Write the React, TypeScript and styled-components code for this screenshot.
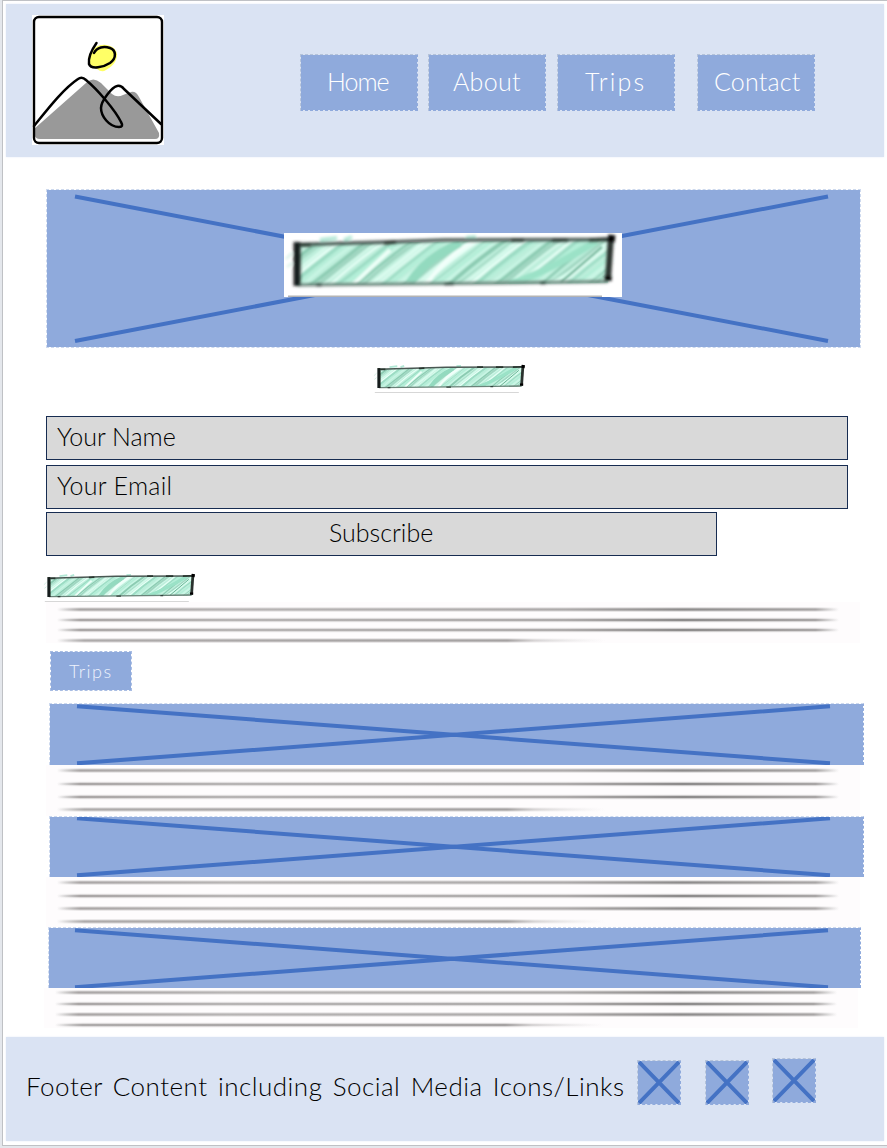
import React from 'react';
import styled, { createGlobalStyle } from 'styled-components';

const ink = '#4472c4';
const block = '#8faadc';
const pale = '#dae3f3';

const GlobalStyle = createGlobalStyle`
  *, *::before, *::after { box-sizing: border-box; }
  body { margin: 0; background: #e4e7ec; }
  svg { display: block; }
`;

const Page = styled.div`
  height: 1146px;
  margin-left: 2px;
  padding: 3px 3px 0;
  border: solid #bfc1c5;
  border-width: 1px 0 1px 1px;
  background: #fff;
  overflow: hidden;
  font-family: 'Ink Free', Lato, 'Liberation Sans', sans-serif;
  font-weight: 300;
  font-size: 25px;
  line-height: 32px;
`;

const Header = styled.header`
  display: flex;
  align-items: flex-start;
  width: 878px;
  height: 153px;
  padding: 11px 0 0 26px;
  background: ${pale};
  box-shadow: 0 0 2px #e6ecf7;
`;

const Nav = styled.nav`
  display: flex;
  gap: 11px;
  margin: 39px 0 0 136px;
`;

const dashedEdge = `
  background: ${block};
  background-clip: padding-box;
  border: 1px dashed ${block};
  border-top-color: #b5c3d9;
  border-left-color: #b5c3d9;
`;

const NavButton = styled.a<{ $shift?: number; $gap?: number; $spacing: number }>`
  ${dashedEdge}
  width: 118px;
  height: 57px;
  margin-left: ${(p) => p.$gap ?? 0}px;
  padding: 10px 0 0 ${(p) => p.$shift ?? 0}px;
  color: #fff;
  letter-spacing: ${(p) => p.$spacing}px;
  white-space: nowrap;
`;

const Main = styled.main`
  display: flex;
  flex-direction: column;
  align-items: flex-start;
  height: 880px;
  padding: 32px 0 0 40px;
`;

const Hero = styled.section`
  ${dashedEdge}
  border-color: #cdd9ee;
  display: grid;
  width: 815px;
  height: 159px;
  > * { grid-area: 1 / 1; }
`;

const Plate = styled.div`
  width: 338px;
  height: 64px;
  margin: 43px 0 0 237px;
  background: #fff;
`;

const Heading = styled.div<{ $left: number; $top: number }>`
  width: 155px;
  height: 29px;
  margin: ${(p) => p.$top}px 0 0 ${(p) => p.$left}px;
`;

const Form = styled.form`
  display: flex;
  flex-direction: column;
  margin-top: 23px;
  color: #000;
`;

const Field = styled.div<{ $spacing: number }>`
  width: 802px;
  height: 44px;
  margin-bottom: 5px;
  padding: 3px 0 0 10px;
  background: #d9d9d9;
  border: 1px solid #172c51;
  letter-spacing: ${(p) => p.$spacing}px;
`;

const Submit = styled(Field)`
  width: 671px;
  margin: -2px 0 0;
  padding: 3px 0 0 282px;
`;

const Copy = styled.div<{ $h: number; $left?: number }>`
  width: 814px;
  height: ${(p) => p.$h}px;
  margin-left: ${(p) => p.$left ?? 0}px;
  background: #fefcfd;
`;

const TripsButton = styled.a`
  ${dashedEdge}
  border-color: #a9bde3;
  width: 82px;
  height: 40px;
  margin: 8px 0 12px 4px;
  padding: 3px 0 0 18px;
  color: #eef3fc;
  font-size: 18px;
  letter-spacing: 1.5px;
`;

const Banner = styled.section<{ $h: number; $left: number; $w: number }>`
  ${dashedEdge}
  border-top-color: #cdd9ee;
  border-left-color: #cdd9ee;
  border-bottom: 0;
  width: ${(p) => p.$w}px;
  height: ${(p) => p.$h}px;
  margin-left: ${(p) => p.$left}px;
`;

const Footer = styled.footer`
  display: flex;
  align-items: flex-start;
  width: 878px;
  height: 104px;
  padding: 22px 0 0 20px;
  background: ${pale};
  box-shadow: 0 0 2px #e6ecf7;
`;

const FooterText = styled.p`
  width: 611px;
  margin: 11px 0 0;
  color: #000;
  font-size: 26px;
  letter-spacing: 0.5px;
  word-spacing: 2.7px;
  white-space: nowrap;
`;

const SocialLink = styled.a<{ $raise?: number; $gap?: number }>`
  ${dashedEdge}
  width: 44px;
  height: 45px;
  margin: ${(p) => 1 - (p.$raise ?? 0)}px 0 0 ${(p) => p.$gap ?? 0}px;
`;

function Logo() {
  return (
    <svg width="132" height="130" viewBox="0 0 132 130">
      <rect width="132" height="130" fill="#fff" />
      <path d="M2 114 L54 68 Q61 61 69 68 L80 79 Q85 83 91 80 L99 77 Q104 76 107 82 L127 118 Q128 124 123 124 H8 Q3 124 2 119Z" fill="#999" />
      <path d="M64 32 C72 27 84 31 85 39 C85 48 79 52 74 55 Q70 58 65 54 L58 51 C54 44 57 37 64 32Z" fill="#ff6" />
      <rect x="2" y="2" width="128" height="126" rx="5" fill="none" stroke="#000" strokeWidth="2.4" />
      <g fill="none" stroke="#000" strokeWidth="2.5" strokeLinecap="round" strokeLinejoin="round">
        <path d="M2 111 C15 95 31 74 46 64 Q50 61 54 65 C66 75 83 95 89 107 Q92 112 87 112 C77 112 69 101 69 93 C69 86 80 72 85 71 Q89 70 92 74 L129 109" />
        <path d="M64.500 28 C61 33 56 42 57 49 C59 55 72 52 78 48 C85 43 84 35 78 33 C72 31 65 32 62 38" />
      </g>
    </svg>
  );
}

function Cross({ w, h, x1, x2, y1, y2, stroke = 4 }: { w: number; h: number; x1: number; x2: number; y1: number; y2: number; stroke?: number }) {
  return (
    <svg width={w} height={h} viewBox={`0 0 ${w} ${h}`}>
      <path d={`M${x1} ${y1} L${x2} ${y2} M${x1} ${y2} L${x2} ${y1}`} stroke={ink} strokeWidth={stroke} fill="none" />
    </svg>
  );
}

const hatch = Array.from({ length: 58 }, (_, i) => ({
  x: -42 + i * 6.6,
  bend: 5 + ((i * 7) % 9),
  width: 1.6 + ((i * 5) % 4) * 0.8,
  color: ['#9cdcc4', '#d9fbee', '#8ccbb2', '#b3efd8', '#e6fff6', '#a0d6c1', '#c9f6e5'][(i * 3) % 7],
}));

function SketchTitle({ id, soft = 1 }: { id: string; soft?: number }) {
  return (
    <svg width="100%" height="100%" viewBox="0 0 338 64" preserveAspectRatio="none">
      <defs>
        <filter id={`${id}-soft`} x="-5%" y="-20%" width="110%" height="140%"><feGaussianBlur stdDeviation={soft} /></filter>
        <filter id={`${id}-edge`} x="-5%" y="-20%" width="110%" height="140%"><feGaussianBlur stdDeviation={soft * 1.4} /></filter>
        <clipPath id={`${id}-clip`}><path d="M12 11 L327 6 L324 50 L12 52Z" /></clipPath>
      </defs>
      <path d="M4 63.3 H318" stroke="#b4b4b4" strokeWidth="1.4" />
      <g clipPath={`url(#${id}-clip)`}>
        <rect width="338" height="64" fill="#bdeedb" />
        <g filter={`url(#${id}-soft)`} fill="none">
          {hatch.map((s) => (
            <path key={s.x} d={`M${s.x} 54 Q${s.x + 22 + s.bend} 28 ${s.x + 62} 5`} stroke={s.color} strokeWidth={s.width} />
          ))}
          <path d="M126 50 Q142 25 176 10" stroke="#93dabf" strokeWidth="9" />
          <path d="M142 53 Q157 27 190 8" stroke="#f2fffa" strokeWidth="4" />
          <path d="M224 52 Q266 38 312 8" stroke="#9be2c7" strokeWidth="7" />
          <path d="M266 51 Q297 34 322 12" stroke="#d8fff0" strokeWidth="3" />
          <path d="M277 49 L318 14" stroke="#5fa98b" strokeWidth="2" />
          <path d="M70 51 Q82 39 106 17" stroke="#edfff8" strokeWidth="4" />
        </g>
      </g>
      <g filter={`url(#${id}-edge)`} fill="none">
        <path d="M36 7 L53 5 M60 7 L68 4 M182 5 L192 4" stroke="#b3e8d6" strokeWidth="4" />
        <path d="M2 26 L8 20 M3 34 L8 30" stroke="#d2efe5" strokeWidth="2" />
        <path d="M12 11.5 L105 9 L160 7 L327 6.5" stroke="#4a5853" strokeWidth="3.4" />
        <path d="M17 12 L27 12 M100 10 L112 9 M227 7 L240 7 M268 7 L284 7 M305 7 L324 6" stroke="#29352f" strokeWidth="3.6" />
        <path d="M13 52 L120 51 L220 50 L324 48.5" stroke="#6b8379" strokeWidth="3" />
        <path d="M32 52 H38 M160 51 H170 M256 50 H262" stroke="#33433c" strokeWidth="2.5" />
        <path d="M13 9 L13 53" stroke="#161c1a" strokeWidth="7" />
        <path d="M327 3 L324 47" stroke="#29302d" strokeWidth="6" />
        <path d="M328 2 L327 9 M324 43 V48" stroke="#000" strokeWidth="7" />
      </g>
    </svg>
  );
}

function CopyLines({ id, h, rows, left = 0 }: { id: string; h: number; rows: number[]; left?: number }) {
  return (
    <Copy $h={h} $left={left}>
      <svg width="814" height={h} viewBox={`0 0 814 ${h}`}>
        <defs>
          <linearGradient id={`${id}-full`} gradientUnits="userSpaceOnUse" x1="11" x2="793" y1="0" y2="0">
            <stop offset="0" stopColor="#aaa" stopOpacity="0" />
            <stop offset=".03" stopColor="#aaa6a6" />
            <stop offset=".22" stopColor="#b7b4b4" />
            <stop offset=".65" stopColor="#adaaaa" />
            <stop offset=".8" stopColor="#8d8b8b" />
            <stop offset=".97" stopColor="#a9a6a6" />
            <stop offset="1" stopColor="#bbb" stopOpacity="0" />
          </linearGradient>
          <linearGradient id={`${id}-last`} gradientUnits="userSpaceOnUse" x1="11" x2="560" y1="0" y2="0">
            <stop offset="0" stopColor="#aaa" stopOpacity="0" />
            <stop offset=".05" stopColor="#aeabab" />
            <stop offset=".82" stopColor="#a5a2a2" />
            <stop offset=".87" stopColor="#bcb9b9" stopOpacity=".5" />
            <stop offset="1" stopColor="#ddd" stopOpacity="0" />
          </linearGradient>
        </defs>
        {rows.map((y, i) => (
          <g key={y} fill={`url(#${id}-${i === 3 ? 'last' : 'full'})`}>
            <rect x="8" y={y - 2.2} width="790" height="4.4" opacity=".35" />
            <rect x="8" y={y - 1.1} width="790" height="2.2" />
          </g>
        ))}
      </svg>
    </Copy>
  );
}

export default function App() {
  return (
    <>
      <GlobalStyle />
      <Page>
        <Header>
          <Logo />
          <Nav>
            <NavButton $shift={26} $spacing={-1}>Home</NavButton>
            <NavButton $shift={24} $gap={-1} $spacing={0.3}>About</NavButton>
            <NavButton $shift={27} $spacing={2.2}>Trips</NavButton>
            <NavButton $shift={16} $gap={11} $spacing={0.2}>Contact</NavButton>
          </Nav>
        </Header>
        <Main>
          <Hero>
            <Cross w={813} h={157} x1={28} x2={781} y1={6.5} y2={151} />
            <Plate><SketchTitle id="hero" soft={1.1} /></Plate>
          </Hero>
          <Heading $left={327} $top={16}><SketchTitle id="intro" soft={0.9} /></Heading>
          <Form>
            <Field $spacing={0}>Your Name</Field>
            <Field $spacing={0.3}>Your Email</Field>
            <Submit $spacing={0}>Subscribe</Submit>
          </Form>
          <Heading $left={-3} $top={17}><SketchTitle id="about" soft={0.9} /></Heading>
          <CopyLines id="c1" h={41} rows={[7.5, 18, 28, 38.5]} />
          <TripsButton>Trips</TripsButton>
          <Banner $h={62} $left={3} $w={815}>
            <Cross w={813} h={61} x1={27} x2={780} y1={2.3} y2={59.3} />
          </Banner>
          <CopyLines id="c2" h={51} rows={[5.5, 19, 32, 44.5]} />
          <Banner $h={61} $left={3} $w={815}>
            <Cross w={813} h={60} x1={27} x2={780} y1={1.3} y2={58.3} />
          </Banner>
          <CopyLines id="c3" h={50} rows={[5.5, 19, 31.5, 44.5]} />
          <Banner $h={61} $left={2} $w={813}>
            <Cross w={811} h={60} x1={26} x2={779} y1={2.3} y2={59.3} />
          </Banner>
          <CopyLines id="c4" h={40} left={-2} rows={[4.5, 16, 26.5, 37]} />
        </Main>
        <Footer>
          <FooterText>Footer Content including Social Media Icons/Links</FooterText>
          <SocialLink $raise={0}>
            <Cross w={42} h={43} x1={1} x2={41} y1={1} y2={42} />
          </SocialLink>
          <SocialLink $gap={24}>
            <Cross w={42} h={43} x1={1} x2={41} y1={1} y2={42} />
          </SocialLink>
          <SocialLink $gap={23} $raise={2}>
            <Cross w={42} h={43} x1={1} x2={41} y1={1} y2={42} />
          </SocialLink>
        </Footer>
      </Page>
    </>
  );
}
